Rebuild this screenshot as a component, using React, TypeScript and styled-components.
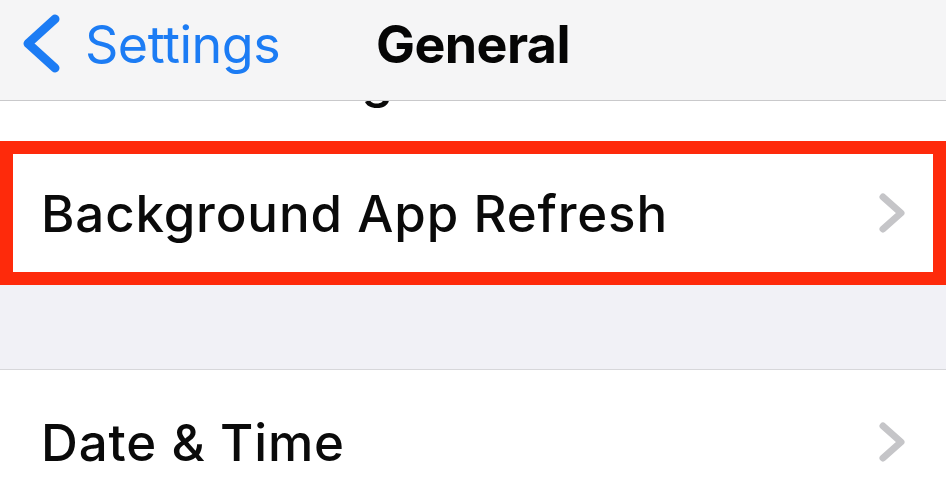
import styled, { createGlobalStyle } from "styled-components";

const GlobalStyle = createGlobalStyle`
  html, body {
    margin: 0;
    padding: 0;
    background: #ffffff;
  }
  body {
    font-family: Inter, "Liberation Sans", Arial, sans-serif;
    -webkit-font-smoothing: antialiased;
  }
`;

const Screen = styled.div`
  width: 946px;
  height: 500px;
  display: flex;
  flex-direction: column;
  overflow: hidden;
  background: #ffffff;
`;

const NavBar = styled.header`
  height: 101px;
  flex-shrink: 0;
  box-sizing: border-box;
  padding: 0 20px 10px 20px;
  display: grid;
  grid-template-columns: 1fr auto 1fr;
  align-items: center;
  background: #f5f5f6;
  border-bottom: 1px solid #c9c9cb;
`;

const BackButton = styled.div`
  display: flex;
  align-items: center;
  gap: 25px;
  color: #1c7cf4;
`;

const BackLabel = styled.span`
  font-size: 52px;
  font-weight: 400;
  letter-spacing: -0.5px;
  line-height: 1;
`;

const Title = styled.h1`
  margin: 0;
  font-size: 52px;
  font-weight: 700;
  letter-spacing: -0.6px;
  line-height: 1;
  color: #050505;
`;

const Content = styled.main`
  flex: 1;
  min-height: 0;
  overflow: hidden;
`;

const Section = styled.section<{ $separated?: boolean }>`
  background: #ffffff;
  border-top: ${(p) => (p.$separated ? "1px solid #d7d7da" : "none")};
`;

const Gap = styled.div`
  height: 84px;
  background: #f1f1f6;
`;

const Row = styled.div<{ $height: number; $offset?: number; $highlight?: boolean }>`
  height: ${(p) => p.$height}px;
  margin-top: ${(p) => p.$offset ?? 0}px;
  box-sizing: border-box;
  display: flex;
  align-items: center;
  justify-content: space-between;
  padding: 0 41px 0 41px;
  box-shadow: ${(p) => (p.$highlight ? "inset 0 0 0 13px #fe2a0b" : "none")};
`;

const Label = styled.span`
  font-size: 51px;
  font-weight: 500;
  letter-spacing: 0.85px;
  line-height: 1;
  color: #0a0a0a;
`;

const BackChevron = () => (
  <svg width="40" height="62" viewBox="0 0 40 62" fill="none">
    <path
      d="M35 5 L8 29.5 L35 54"
      stroke="#1c7cf4"
      strokeWidth="9"
      strokeLinecap="round"
      strokeLinejoin="round"
    />
  </svg>
);

const Disclosure = () => (
  <svg width="26" height="40" viewBox="0 0 26 40" fill="none">
    <path
      d="M4 4 L22 20 L4 36"
      stroke="#c5c5c8"
      strokeWidth="7"
      strokeLinecap="round"
      strokeLinejoin="round"
    />
  </svg>
);

export default function App() {
  return (
    <>
      <GlobalStyle />
      <Screen>
        <NavBar>
          <BackButton>
            <BackChevron />
            <BackLabel>Settings</BackLabel>
          </BackButton>
          <Title>General</Title>
          <div />
        </NavBar>
        <Content>
          <Section>
            <Row $height={126} $offset={-86}>
              <Label>iPhone Storage</Label>
              <Disclosure />
            </Row>
            <Row $height={144} $highlight>
              <Label>Background App Refresh</Label>
              <Disclosure />
            </Row>
          </Section>
          <Gap />
          <Section $separated>
            <Row $height={144}>
              <Label>Date &amp; Time</Label>
              <Disclosure />
            </Row>
          </Section>
        </Content>
      </Screen>
    </>
  );
}
